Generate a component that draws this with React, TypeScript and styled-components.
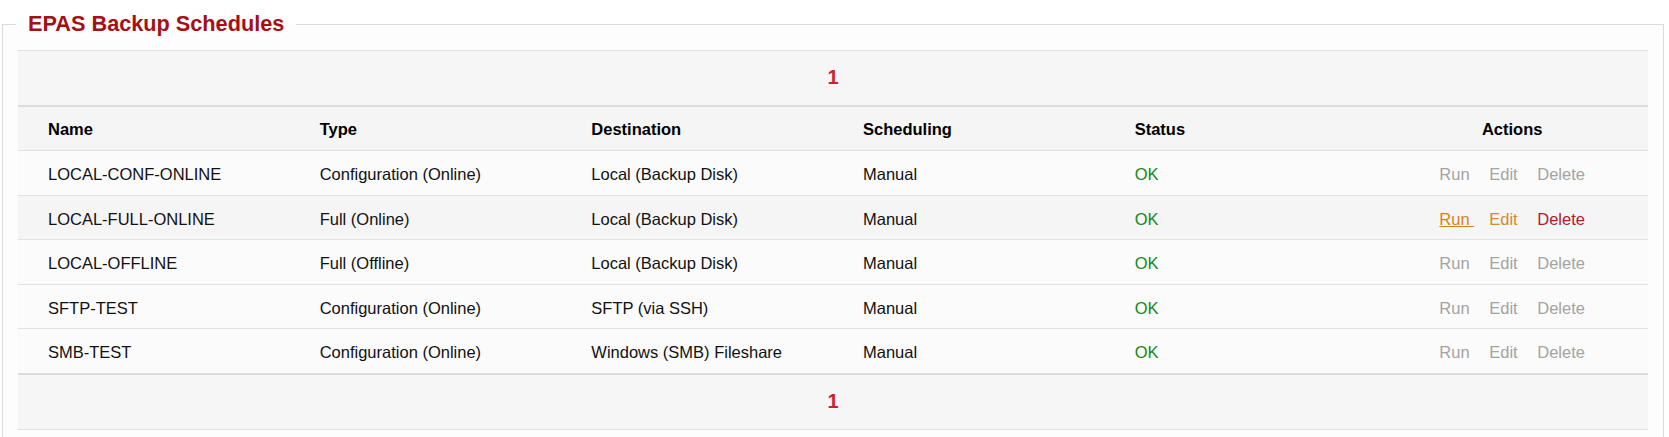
import React from "react";
import styled, { createGlobalStyle } from "styled-components";

const GlobalStyle = createGlobalStyle`
  html, body { margin: 0; padding: 0; background: #ffffff; }
  body { font-family: "Liberation Sans", Arial, sans-serif; color: #111111; }
`;

const Panel = styled.fieldset`
  margin: 11px 5px 0 2px;
  padding: 13px 15px 20px;
  border: 1px solid #dcdcdc;
  background: #fdfdfd;
  min-width: 0;
`;

const Title = styled.legend`
  margin-left: -2px;
  padding: 0 12px;
  font-size: 21.7px;
  line-height: 26px;
  font-weight: bold;
  color: #a50f15;
`;

const Table = styled.table`
  width: 100%;
  table-layout: fixed;
  border-collapse: separate;
  border-spacing: 0;
  font-size: 16.5px;
  line-height: 19px;
`;

const PagerCell = styled.td<{ $position: "top" | "bottom" }>`
  height: 54px;
  padding: 0;
  text-align: center;
  vertical-align: middle;
  background: #f6f6f6;
  border-top: ${(p) => (p.$position === "top" ? "1px solid #e2e2e2" : "none")};
  border-bottom: ${(p) => (p.$position === "top" ? "2px solid #dcdcdc" : "1px solid #e2e2e2")};
`;

const PageNumber = styled.span`
  font-size: 20px;
  font-weight: bold;
  color: #cf1f30;
`;

const HeadCell = styled.th<{ $align?: "left" | "center" }>`
  padding: 13px 30px 11px;
  text-align: ${(p) => p.$align ?? "left"};
  vertical-align: top;
  font-weight: bold;
  color: #000000;
  background: #f5f5f5;
  border-bottom: 1px solid #e2e2e2;
`;

const Cell = styled.td<{ $hover?: boolean; $last?: boolean; $align?: "left" | "center" }>`
  padding: 14.25px 30px 10.25px;
  text-align: ${(p) => p.$align ?? "left"};
  vertical-align: top;
  color: #111111;
  background: ${(p) => (p.$hover ? "#f5f5f5" : "#fbfbfb")};
  border-bottom: ${(p) => (p.$last ? "2px solid #dcdcdc" : "1px solid #e2e2e2")};
  white-space: nowrap;
`;

const StatusText = styled.span`
  color: #118a17;
`;

const Actions = styled.span`
  display: inline-flex;
  gap: 15px;
  white-space: pre;
`;

type Tone = "muted" | "run" | "edit" | "delete";

const toneColor: Record<Tone, string> = {
  muted: "#a3a3a3",
  run: "#d9801f",
  edit: "#d58a2c",
  delete: "#a6222f",
};

const ActionLink = styled.a<{ $tone: Tone; $underline?: boolean }>`
  color: ${(p) => toneColor[p.$tone]};
  text-decoration: ${(p) => (p.$underline ? "underline" : "none")};
  cursor: pointer;
`;

const rows = [
  { name: "LOCAL-CONF-ONLINE", type: "Configuration (Online)", dest: "Local (Backup Disk)" },
  { name: "LOCAL-FULL-ONLINE", type: "Full (Online)", dest: "Local (Backup Disk)", hover: true },
  { name: "LOCAL-OFFLINE", type: "Full (Offline)", dest: "Local (Backup Disk)" },
  { name: "SFTP-TEST", type: "Configuration (Online)", dest: "SFTP (via SSH)" },
  { name: "SMB-TEST", type: "Configuration (Online)", dest: "Windows (SMB) Fileshare" },
];

const NBSP = "\u00a0";

export default function App() {
  return (
    <>
      <GlobalStyle />
      <Panel>
        <Title>EPAS Backup Schedules</Title>
        <Table>
          <thead>
            <tr>
              <PagerCell colSpan={6} $position="top">
                <PageNumber>1</PageNumber>
              </PagerCell>
            </tr>
            <tr>
              <HeadCell>Name</HeadCell>
              <HeadCell>Type</HeadCell>
              <HeadCell>Destination</HeadCell>
              <HeadCell>Scheduling</HeadCell>
              <HeadCell>Status</HeadCell>
              <HeadCell $align="center">Actions</HeadCell>
            </tr>
          </thead>
          <tbody>
            {rows.map((r, i) => {
              const last = i === rows.length - 1;
              return (
                <tr key={r.name}>
                  <Cell $hover={r.hover} $last={last}>{r.name}</Cell>
                  <Cell $hover={r.hover} $last={last}>{r.type}</Cell>
                  <Cell $hover={r.hover} $last={last}>{r.dest}</Cell>
                  <Cell $hover={r.hover} $last={last}>Manual</Cell>
                  <Cell $hover={r.hover} $last={last}>
                    <StatusText>OK</StatusText>
                  </Cell>
                  <Cell $hover={r.hover} $last={last} $align="center">
                    <Actions>
                      <ActionLink $tone={r.hover ? "run" : "muted"} $underline={r.hover}>
                        {"Run" + NBSP}
                      </ActionLink>
                      <ActionLink $tone={r.hover ? "edit" : "muted"}>{"Edit" + NBSP}</ActionLink>
                      <ActionLink $tone={r.hover ? "delete" : "muted"}>Delete</ActionLink>
                    </Actions>
                  </Cell>
                </tr>
              );
            })}
          </tbody>
          <tfoot>
            <tr>
              <PagerCell colSpan={6} $position="bottom">
                <PageNumber>1</PageNumber>
              </PagerCell>
            </tr>
          </tfoot>
        </Table>
      </Panel>
    </>
  );
}
